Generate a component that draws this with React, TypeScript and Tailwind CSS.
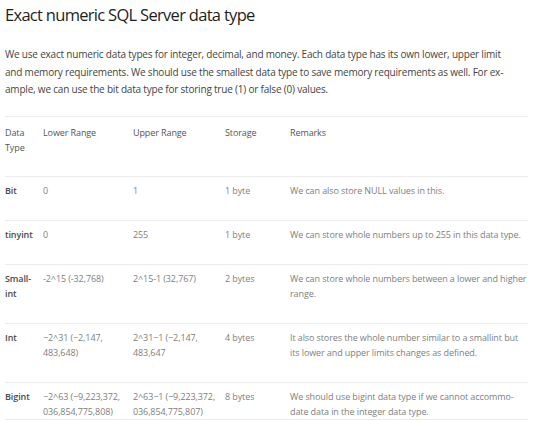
import React from 'react';

type Row = {
  name: React.ReactNode;
  lower: React.ReactNode;
  upper: React.ReactNode;
  storage: string;
  remarks: string;
};

const rows: Row[] = [
  { name: 'Bit', lower: '0', upper: '1', storage: '1 byte', remarks: 'We can also store NULL values in this.' },
  { name: 'tinyint', lower: '0', upper: '255', storage: '1 byte', remarks: 'We can store whole numbers up to 255 in this data type.' },
  {
    name: (
      <>
        Small-
        <br />
        int
      </>
    ),
    lower: '-2^15 (-32,768)',
    upper: '2^15-1 (32,767)',
    storage: '2 bytes',
    remarks: 'We can store whole numbers between a lower and higher range.',
  },
  {
    name: 'Int',
    lower: '\u22122^31 (\u22122,147, 483,648)',
    upper: '2^31\u22121 (\u22122,147, 483,647',
    storage: '4 bytes',
    remarks: 'It also stores the whole number similar to a smallint but its lower and upper limits changes as defined.',
  },
  {
    name: 'Bigint',
    lower: '\u22122^63 (\u22129,223,372, 036,854,775,808)',
    upper: '2^63\u22121 (\u22129,223,372, 036,854,775,807)',
    storage: '8 bytes',
    remarks: 'We should use bigint data type if we cannot accommo\u00ADdate data in the integer data type.',
  },
];

export default function App() {
  return (
    <div className="w-[540px] h-[421px] overflow-hidden bg-white px-[5px] font-['Open_Sans',sans-serif]">
      {/* Title */}
      <h1 className="pt-[3px] text-[16.5px] leading-[24px] tracking-[-0.7px] text-[#1e1e1e]">
        Exact numeric SQL Server data type
      </h1>

      {/* Intro */}
      <p className="mt-[19px] w-[505px] text-[10px] leading-[17.5px] tracking-[-0.2px] text-[#444] hyphens-manual">
        We use exact numeric data types for integer, decimal, and money. Each data type has its own lower, upper limit
        and memory requirements. We should use the smallest data type to save memory requirements as well. For ex{'\u00AD'}ample,
        we can use the bit data type for storing true (1) or false (0) values.
      </p>

      {/* Table */}
      <table className="mt-[17px] w-[523px] table-fixed border-collapse text-[9px] leading-[15px] tracking-[-0.1px] hyphens-manual">
        <colgroup>
          <col className="w-[38px]" />
          <col className="w-[90px]" />
          <col className="w-[92px]" />
          <col className="w-[65px]" />
          <col />
        </colgroup>
        <thead>
          <tr className="border-t border-b border-[#ececec] text-[#555] align-top">
            <th className="pt-[8px] pb-[21px] pr-[6px] text-left font-normal">Data Type</th>
            <th className="pt-[8px] pb-[21px] pr-[6px] text-left font-normal">Lower Range</th>
            <th className="pt-[8px] pb-[21px] pr-[6px] text-left font-normal">Upper Range</th>
            <th className="pt-[8px] pb-[21px] pr-[6px] text-left font-normal">Storage</th>
            <th className="pt-[8px] pb-[21px] text-left font-normal">Remarks</th>
          </tr>
        </thead>
        <tbody>
          {rows.map((r, i) => {
            const pad = i === rows.length - 1 ? 'pt-[6px] pb-0' : 'pt-[6px] pb-[22px]';
            return (
              <tr key={r.storage + i} className="border-b border-[#ececec] align-top text-[#808080]">
                <td className={`${pad} pr-[2px] font-semibold text-[#4a4a4a]`}>{r.name}</td>
                <td className={`${pad} pr-[6px]`}>{r.lower}</td>
                <td className={`${pad} pr-[6px]`}>{r.upper}</td>
                <td className={`${pad} pr-[6px]`}>{r.storage}</td>
                <td className={`${pad} pr-0`}>{r.remarks}</td>
              </tr>
            );
          })}
        </tbody>
      </table>
    </div>
  );
}
